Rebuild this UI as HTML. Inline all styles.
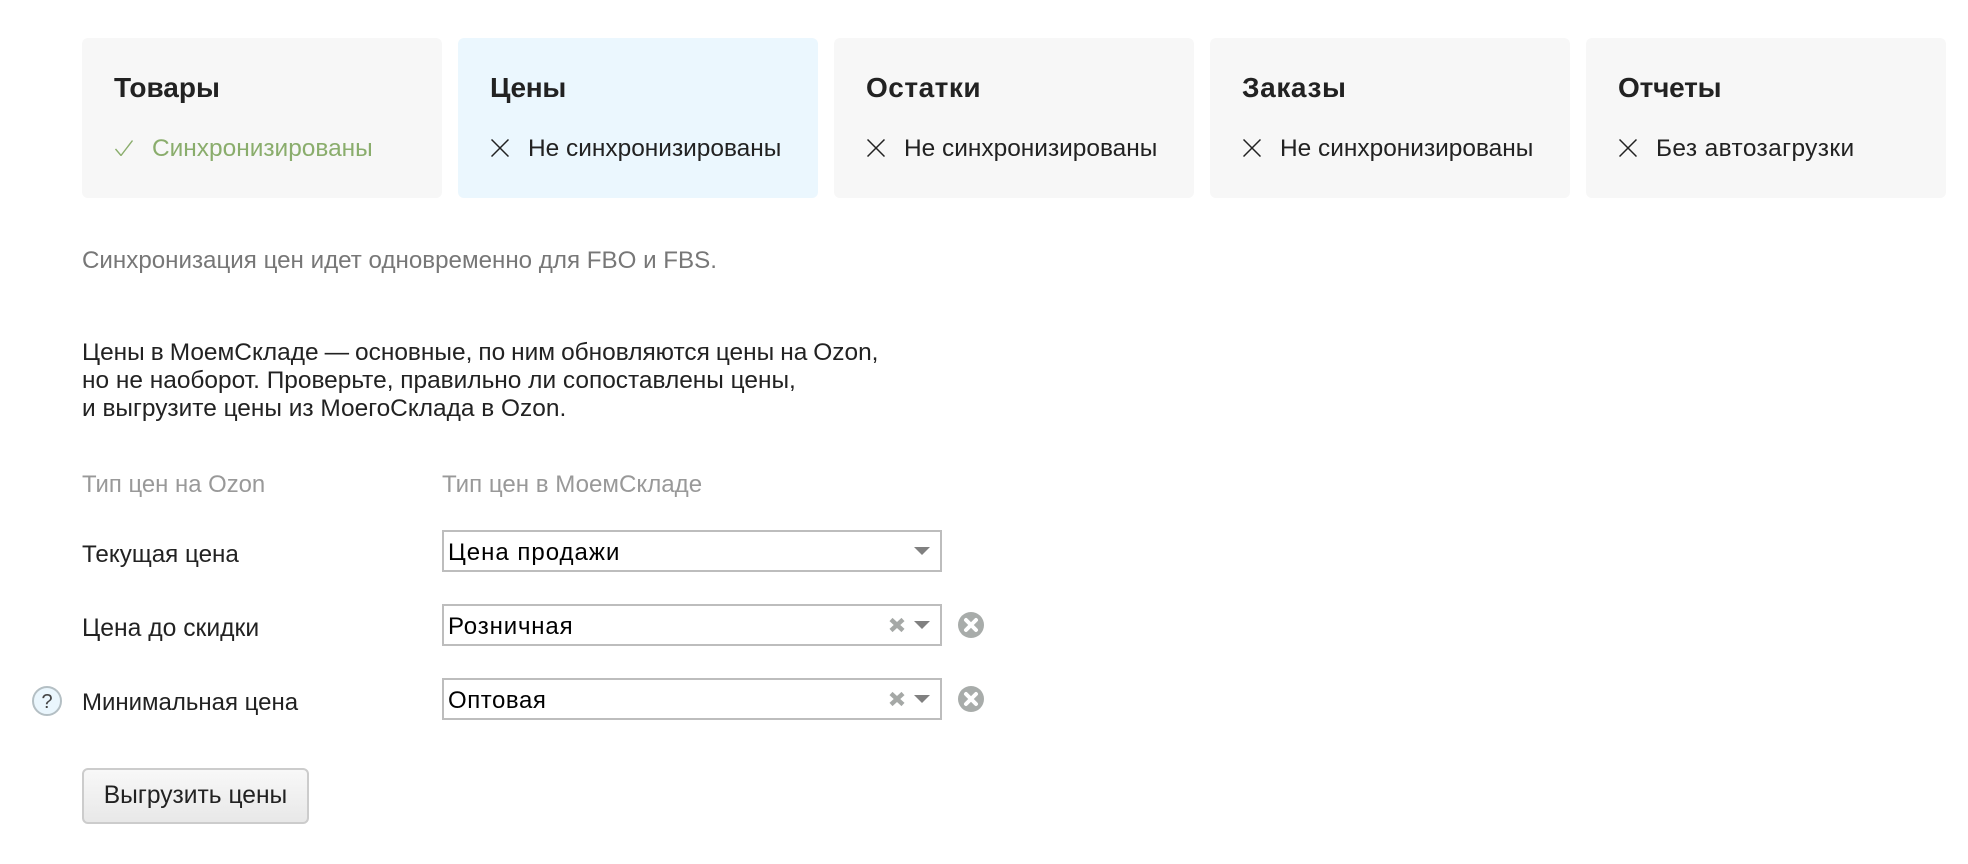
<!DOCTYPE html>
<html lang="ru"><head><meta charset="utf-8"><title>Цены</title>
<style>
html,body{margin:0;padding:0;background:#fff}
body{position:relative;width:1968px;height:864px;overflow:hidden;font-family:"Liberation Sans",Arial,sans-serif;color:#222}
.a{position:absolute;white-space:nowrap;line-height:30px;font-size:24px}
.card{position:absolute;top:38px;width:360px;height:160px;border-radius:6px;background:#f7f7f7}
.card.on{background:#ebf7fe}
.t{position:absolute;left:32px;top:35px;font-weight:bold;font-size:28px;line-height:30px;color:#222;white-space:nowrap}
.s{position:absolute;left:70px;top:95.5px;font-size:24.45px;line-height:30px;color:#222;white-space:nowrap}
.card svg{position:absolute;left:32px;top:101px}
.sel{position:absolute;left:442px;width:496px;height:38px;border:2px solid #bdbdbd;background:#fff}
.sel span{position:absolute;left:4px;top:5.5px;font-size:24px;line-height:30px;color:#000;white-space:nowrap}
svg.i{position:absolute}
.btn{position:absolute;left:82px;top:768px;width:223px;height:52px;border:2px solid #ccc;border-radius:6px;background:linear-gradient(#f8f8f8,#e8e8e8);text-align:center;font-size:24.6px;line-height:51px;color:#222}
</style></head><body>
<div class="card" style="left:82px"><div class="t">Товары</div><svg style="left:33px;top:102px" width="18" height="16" viewBox="0 0 18 16" fill="none" stroke="#8aad6c" stroke-width="1.4"><path d="M0.5 9l5.5 6.5L17.5 0.5"/></svg><div class="s" style="left:70px;color:#8aad6c">Синхронизированы</div></div>
<div class="card on" style="left:458px"><div class="t" style="letter-spacing:-.3px">Цены</div><svg style="left:32.5px" width="18" height="18" viewBox="0 0 18 18" fill="none" stroke="#222" stroke-width="1.5"><path d="M0.5 0.5l17 17M17.5 0.5l-17 17"/></svg><div class="s">Не синхронизированы</div></div>
<div class="card" style="left:834px"><div class="t" style="letter-spacing:.5px">Остатки</div><svg style="left:32.5px" width="18" height="18" viewBox="0 0 18 18" fill="none" stroke="#222" stroke-width="1.5"><path d="M0.5 0.5l17 17M17.5 0.5l-17 17"/></svg><div class="s">Не синхронизированы</div></div>
<div class="card" style="left:1210px"><div class="t" style="letter-spacing:.6px">Заказы</div><svg style="left:32.5px" width="18" height="18" viewBox="0 0 18 18" fill="none" stroke="#222" stroke-width="1.5"><path d="M0.5 0.5l17 17M17.5 0.5l-17 17"/></svg><div class="s">Не синхронизированы</div></div>
<div class="card" style="left:1586px"><div class="t" style="letter-spacing:-.2px">Отчеты</div><svg style="left:32.5px" width="18" height="18" viewBox="0 0 18 18" fill="none" stroke="#222" stroke-width="1.5"><path d="M0.5 0.5l17 17M17.5 0.5l-17 17"/></svg><div class="s" style="letter-spacing:.4px">Без автозагрузки</div></div>

<div class="a" style="left:82px;top:245.5px;color:#777;font-size:24.15px">Синхронизация цен идет одновременно для FBO и FBS.</div>
<div class="a" style="left:82px;top:339px;line-height:28px;color:#222;font-size:24.45px"><span style="word-spacing:-0.8px">Цены в МоемСкладе — основные, по ним обновляются цены на Ozon,</span><br>но не наоборот. Проверьте, правильно ли сопоставлены цены,<br>и выгрузите цены из МоегоСклада в Ozon.</div>
<div class="a" style="left:82px;top:469.5px;color:#999;font-size:23.9px">Тип цен на Ozon</div>
<div class="a" style="left:442px;top:469.5px;color:#999;font-size:24.1px">Тип цен в МоемСкладе</div>
<div class="a" style="left:82px;top:539.5px;font-size:24.2px">Текущая цена</div>
<div class="a" style="left:82px;top:613.5px;font-size:24.7px">Цена до скидки</div>
<div class="a" style="left:82px;top:687.5px">Минимальная цена</div>

<div class="sel" style="top:530px"><span style="letter-spacing:1px">Цена продажи</span></div>
<div class="sel" style="top:604px"><span style="letter-spacing:.85px">Розничная</span></div>
<div class="sel" style="top:678px"><span style="letter-spacing:.55px">Оптовая</span></div>

<svg class="i" style="left:914px;top:547px" width="16" height="8" viewBox="0 0 16 8"><path d="M0 0h16L8 8z" fill="#808080"/></svg>
<svg class="i" style="left:914px;top:621px" width="16" height="8" viewBox="0 0 16 8"><path d="M0 0h16L8 8z" fill="#808080"/></svg>
<svg class="i" style="left:914px;top:695px" width="16" height="8" viewBox="0 0 16 8"><path d="M0 0h16L8 8z" fill="#808080"/></svg>
<svg class="i" style="left:888px;top:617px" width="18" height="16" viewBox="0 0 18 16"><path d="M3 2.5l12 11M15 2.5l-12 11" stroke="#a5a8a6" stroke-width="4.5" fill="none"/></svg>
<svg class="i" style="left:888px;top:691px" width="18" height="16" viewBox="0 0 18 16"><path d="M3 2.5l12 11M15 2.5l-12 11" stroke="#a5a8a6" stroke-width="4.5" fill="none"/></svg>
<svg class="i" style="left:958px;top:612px" width="26" height="26" viewBox="0 0 26 26"><circle cx="13" cy="13" r="13" fill="#a8acaa"/><path d="M8 8l10 10M18 8L8 18" stroke="#fff" stroke-width="4" stroke-linecap="round"/></svg>
<svg class="i" style="left:958px;top:686px" width="26" height="26" viewBox="0 0 26 26"><circle cx="13" cy="13" r="13" fill="#a8acaa"/><path d="M8 8l10 10M18 8L8 18" stroke="#fff" stroke-width="4" stroke-linecap="round"/></svg>
<svg class="i" style="left:32px;top:686px" width="30" height="30" viewBox="0 0 30 30"><circle cx="15" cy="15" r="14" fill="#eaf6fd" stroke="#b4bfc4" stroke-width="2"/><text x="15" y="22" font-family="Liberation Sans,sans-serif" font-size="20" text-anchor="middle" fill="#444">?</text></svg>

<div class="btn">Выгрузить цены</div>
</body></html>
